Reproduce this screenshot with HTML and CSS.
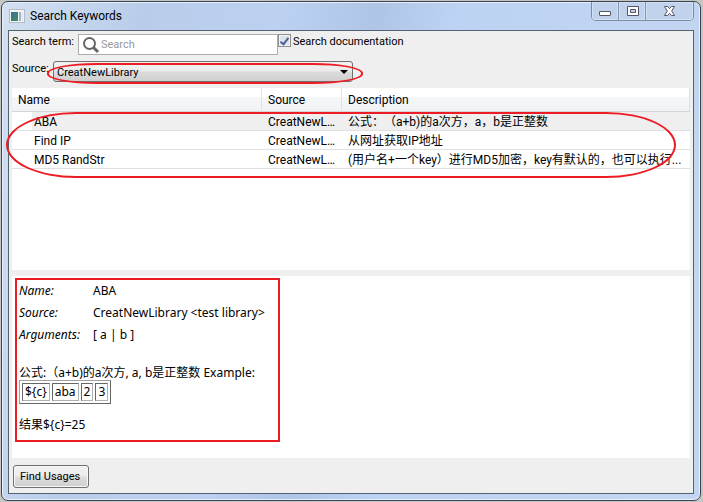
FILE: index.html
```
<!DOCTYPE html>
<html lang="zh">
<head>
	<meta charset="utf-8">
	<title>Search Keywords</title>
	<link rel="stylesheet" href="styles.css">
</head>
<body>

	<div class="window">
		<header class="titlebar">
			<svg class="app-icon" width="16" height="14" viewBox="0 0 16 14" aria-hidden="true">
				<defs>
					<linearGradient id="screen" x1="0" y1="0" x2="1" y2="1">
						<stop offset="0" stop-color="#3b6ea0"/>
						<stop offset="1" stop-color="#3f8f5c"/>
					</linearGradient>
				</defs>
				<rect x=".5" y=".5" width="15" height="13" fill="#f4f4f4" stroke="#b4bcc6"/>
				<rect x="2" y="3" width="7" height="9" fill="url(#screen)"/>
				<rect x="10" y="3" width="2" height="9" fill="#9fb5c8"/>
				<rect x="13" y="3" width="1" height="9" fill="#d8dde2"/>
			</svg>
			<h1>Search Keywords</h1>
			<div class="window-buttons">
				<button type="button" aria-label="Minimize">
					<svg width="13" height="13" viewBox="0 0 13 13"><rect x=".5" y="6.5" width="11" height="4" rx=".5" fill="#fff" stroke="#535666"/></svg>
				</button>
				<button type="button" aria-label="Maximize">
					<svg width="13" height="13" viewBox="0 0 13 13"><path d="M1.500 1.500h11v9h-11zM4.500 4.500h5v3h-5z" fill="#fff" fill-rule="evenodd" stroke="#535666"/></svg>
				</button>
				<button type="button" class="close" aria-label="Close">
					<svg width="13" height="13" viewBox="0 0 13 13"><path d="M1.500 1.500h3.200l1.800 2.200 1.800-2.200h3.200L8.700 6l2.800 4.500H8.300L6.500 8.300l-1.800 2.200H1.500L4.300 6z" fill="#fff" stroke="#535666"/></svg>
				</button>
			</div>
		</header>

		<main class="client">
			<form class="filters">
				<div class="row">
					<label for="term">Search term:</label>
					<div class="search">
						<svg width="18" height="18" viewBox="0 0 18 18" aria-hidden="true">
							<circle cx="7.500" cy="7.500" r="5.500" fill="none" stroke="#666" stroke-width="2"/>
							<path d="M11.500 11.500l4.500 4.500" stroke="#666" stroke-width="3"/>
						</svg>
						<input type="text" id="term" placeholder="Search">
					</div>
					<input type="checkbox" id="docs" checked>
					<label for="docs">Search documentation</label>
				</div>
				<div class="row">
					<label for="source">Source:</label>
					<div class="select">
						<select id="source">
							<option>CreatNewLibrary</option>
						</select>
					</div>
				</div>
			</form>

			<section class="results">
				<table>
					<thead>
						<tr><th class="col-name">Name</th><th class="col-source">Source</th><th>Description</th></tr>
					</thead>
					<tbody>
						<tr class="selected"><td>ABA</td><td>CreatNewL...</td><td>公式：（a+b)的a次方，a，b是正整数</td></tr>
						<tr><td>Find IP</td><td>CreatNewL...</td><td>从网址获取IP地址</td></tr>
						<tr><td>MD5 RandStr</td><td>CreatNewL...</td><td>(用户名+一个key）进行MD5加密，key有默认的，也可以执行...</td></tr>
					</tbody>
				</table>
			</section>

			<section class="details">
				<dl>
					<dt>Name:</dt><dd>ABA</dd>
					<dt>Source:</dt><dd>CreatNewLibrary &lt;test library&gt;</dd>
					<dt>Arguments:</dt><dd>[ a | b ]</dd>
				</dl>
				<p>公式:（a+b)的a次方, a, b是正整数 Example:</p>
				<table class="example">
					<tr><td>${c}</td><td>aba</td><td>2</td><td>3</td></tr>
				</table>
				<p>结果${c}=25</p>
			</section>

			<footer>
				<button type="button" class="btn">Find Usages</button>
			</footer>
		</main>
	</div>

</body>
</html>
```
FILE: styles.css
```
*, ::before, ::after {
	box-sizing: border-box;
}
body {
	margin: 0;
	background: #c4c6c6;
	color: #000;
	font: 11px/16px Roboto, "Noto Sans CJK SC", sans-serif;
}
button, input, select {
	font: inherit;
	color: inherit;
	margin: 0;
}

/* window frame */
.window {
	display: flex;
	flex-direction: column;
	min-height: calc(100vh - 2px);
	margin: 1px 2px 1px 1px;
	padding: 0 6px 6px;
	border: 1px solid #3c4652;
	border-radius: 7px;
	background: linear-gradient(100deg, #d3e0f1 0, #b9cdea 18%, #bcd1f1 36%, #afc5e6 48%, #bdd3f3 58%, #c3d6f1 100%);
	box-shadow: inset 0 0 0 1px #e6effa;
}
.titlebar {
	display: flex;
	height: 28px;
}
.app-icon {
	margin: 7px 5px 0 1px;
}
h1 {
	flex: 1;
	margin: 5px 0 0;
	font-size: 12px;
	font-weight: normal;
	line-height: 18px;
}
.window-buttons {
	display: flex;
	height: 19px;
	border: 1px solid #7c8ba2;
	border-top: 0;
	border-radius: 0 0 5px 5px;
}
.window-buttons button {
	display: flex;
	align-items: center;
	justify-content: center;
	width: 27px;
	padding: 0;
	border: 0;
	border-right: 1px solid #8494ab;
	background: #c1d3ec;
	box-shadow: inset 0 0 0 1px #d3e1f4;
}
.window-buttons button:first-child {
	border-radius: 0 0 0 4px;
}
.window-buttons .close {
	width: 47px;
	border-right: 0;
	border-radius: 0 0 4px 0;
}

.client {
	flex: 1;
	display: flex;
	flex-direction: column;
	padding: 3px;
	border: 1px solid #536171;
	background: #efefef;
}

/* search form */
.row {
	display: flex;
	align-items: flex-start;
	height: 27px;
}
.row label {
	line-height: 16px;
}
.row > label:first-child {
	min-width: 41px;
}
.search {
	display: flex;
	align-items: center;
	width: 200px;
	height: 21px;
	margin-left: 4px;
	padding-left: 3px;
	border: 1px solid #abadb3;
	background: #fff;
}
.search input {
	flex: 1;
	min-width: 0;
	padding: 1px 1px 0;
	border: 0;
	background: none;
}
.search input::placeholder {
	color: #999;
}
[type="checkbox"] {
	appearance: none;
	display: grid;
	place-items: center;
	width: 13px;
	height: 13px;
	margin-right: 2px;
	border: 1px solid #8e8f8f;
	background: #dfe3e8;
	box-shadow: inset 0 0 0 1px #f4f4f4;
}
[type="checkbox"]:checked::after {
	content: "";
	width: 5px;
	height: 9px;
	border: solid #4b5f9c;
	border-width: 0 2px 2px 0;
	transform: rotate(38deg);
}
.select {
	position: relative;
	width: 300px;
}
select {
	appearance: none;
	display: block;
	width: 100%;
	height: 21px;
	padding: 2px 3px 0;
	border: 1px solid #707070;
	border-radius: 3px;
	background: linear-gradient(#f2f2f2, #ebebeb 48%, #dcdcdc 52%, #cfcfcf);
}
.select::before {
	content: "";
	position: absolute;
	top: 9px;
	right: 5px;
	border: solid transparent;
	border-width: 4px 4px 0;
	border-top-color: #000;
}
/* red markers drawn over the content */
.select::after,
.results::after,
.details::after {
	content: "";
	position: absolute;
	border: 2px solid #ed1c24;
	pointer-events: none;
}
.select::after {
	inset: 2px -10px -2px -6px;
	border-radius: 50px / 10px;
}

/* keyword list */
.results {
	position: relative;
	height: 182px;
	background: #fff;
	font-size: 12px;
}
.results table {
	width: 100%;
	table-layout: fixed;
	border-collapse: separate;
	border-spacing: 0;
}
.results th,
.results td {
	overflow: hidden;
	padding: 0 6px;
	font-weight: normal;
	text-align: left;
	text-overflow: ellipsis;
	white-space: nowrap;
}
.results th {
	height: 24px;
	border-right: 1px solid #dfe1e4;
	border-bottom: 1px solid #d5d5d5;
	background: linear-gradient(#fff 40%, #f5f6f8 40%, #f1f2f4);
}
.results td {
	height: 19px;
	padding-top: 2px;
	border-bottom: 1px solid #e0e0e0;
	line-height: 16px;
	text-spacing-trim: space-all;
}
.results td:first-child {
	padding-left: 22px;
}
.selected td {
	background: #efefef;
}
.selected td:first-child {
	background: linear-gradient(90deg, #fff 20px, #efefef 20px);
}
.col-name {
	width: 250px;
}
.col-source {
	width: 80px;
}
.results::after {
	top: 24px;
	right: 14px;
	left: -6px;
	height: 66px;
	border-radius: 70px / 33px;
}

/* keyword documentation */
.details {
	position: relative;
	flex: 1;
	margin-top: 6px;
	padding: 4px 7px;
	background: #fff;
	font-family: "Noto Sans", "Noto Sans CJK SC", sans-serif;
	font-size: 12px;
}
.details::after {
	top: 2px;
	left: 3px;
	width: 265px;
	height: 164px;
}
dl {
	display: grid;
	grid-template-columns: 74px 1fr;
	margin: 0 0 20px;
	line-height: 22px;
}
dt {
	font-style: italic;
}
dd {
	margin: 0;
}
.details p {
	margin: 0;
	line-height: 14px;
}
.example {
	margin-bottom: 14px;
	border: 1px solid;
	border-color: #a0a0a0 #666 #666 #a0a0a0;
	border-spacing: 2px;
	line-height: 16px;
}
.example td {
	padding: 0 2px;
	border: 1px solid;
	border-color: #666 #b0b0b0 #b0b0b0 #666;
}

footer {
	padding: 7px 1px 2px;
}
.btn {
	height: 23px;
	padding: 1px 8px 0 6px;
	border: 1px solid #707070;
	border-radius: 3px;
	background: linear-gradient(#f2f2f2, #ebebeb 48%, #dddddd 52%, #cfcfcf);
	box-shadow: inset 0 0 0 1px #f8f8f8;
}
```
